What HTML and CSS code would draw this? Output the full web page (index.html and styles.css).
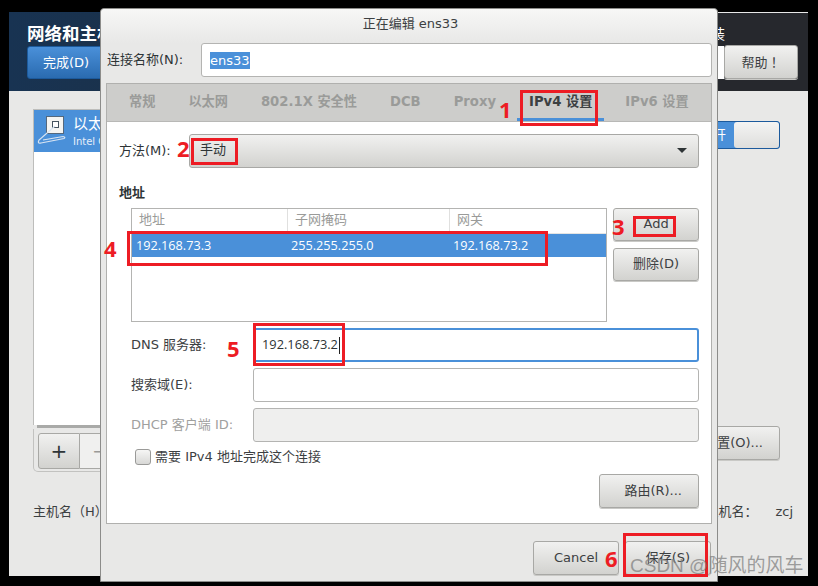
FILE: index.html
```html
<!DOCTYPE html>
<html lang="zh">
<head>
<meta charset="utf-8">
<title>正在编辑 ens33</title>
<link rel="stylesheet" href="styles.css">
</head>
<body>
<div class="desktop">
  <section class="bgwin">
    <header class="bghead">
      <div class="bghead-left">
        <h1 class="bgtitle">网络和主机名(N)</h1>
        <button class="btn btn-blue">完成(D)</button>
      </div>
      <div class="bghead-right">
        <div class="install">CENTOS 7 安装</div>
        <div class="help-row">
          <span class="kbd"></span>
          <button class="btn btn-help" lang="zh-Hant">帮助！</button>
        </div>
      </div>
    </header>
    <div class="bgmain">
      <div class="devcol">
        <div class="devlist">
          <div class="devrow">
            <svg class="devicon" width="30" height="32" viewBox="0 0 30 32">
              <rect x="9.5" y="2.5" width="17" height="17" fill="#f4f4f2" stroke="#55687c"/>
              <rect x="15.5" y="7.5" width="6" height="6" fill="#fff" stroke="#44525f"/>
              <path d="M18 12 L2 26 Q0 30 4 29 L27 24.5 Q29 23 26 22.5 L6 26" fill="none" stroke="#d8e4f2" stroke-width="1.2"/>
            </svg>
            <div class="devtext">
              <div class="devname">以太网 (ens33)</div>
              <div class="devsub">Intel Corporation</div>
            </div>
          </div>
        </div>
        <div class="devbar"></div>
        <div class="devtools">
          <button class="toolbtn">+</button>
          <button class="toolbtn toolbtn-off">−</button>
        </div>
      </div>
      <div class="sidecol">
        <div class="switch"><span class="switch-on">打开</span><span class="switch-knob"></span></div>
        <button class="btn btn-config">配置(O)...</button>
      </div>
    </div>
    <footer class="hostrow">
      <span>主机名（H）：</span>
      <span class="host-current"><span>当前主机名：</span><span class="host-val">zcj</span></span>
    </footer>
  </section>

  <section class="dialog">
    <div class="dlgtitle">正在编辑 ens33</div>
    <div class="namerow">
      <label class="namelabel">连接名称(N):</label>
      <div class="entry nameentry"><span class="sel">ens33</span></div>
    </div>
    <div class="notebook">
      <nav class="tabs">
        <span class="tab">常规</span>
        <span class="tab">以太网</span>
        <span class="tab">802.1X 安全性</span>
        <span class="tab">DCB</span>
        <span class="tab">Proxy</span>
        <span class="tab tab-active">IPv4 设置</span>
        <span class="tab">IPv6 设置</span>
      </nav>
      <div class="panel">
        <div class="methodrow">
          <span class="methodlabel">方法(M):</span>
          <div class="combo"><span>手动</span><span class="caret"></span></div>
        </div>
        <div class="addrhead">地址</div>
        <div class="addrrow">
          <div class="addrtable">
            <div class="thead"><span>地址</span><span>子网掩码</span><span>网关</span></div>
            <div class="trow"><span>192.168.73.3</span><span>255.255.255.0</span><span>192.168.73.2</span></div>
          </div>
          <div class="addrbtns">
            <button class="btn btn-side">Add</button>
            <button class="btn btn-side">删除(D)</button>
          </div>
        </div>
        <div class="formrow">
          <span class="formlabel">DNS 服务器:</span>
          <div class="entry entry-focus"><span>192.168.73.2</span><i class="cursor"></i></div>
        </div>
        <div class="formrow">
          <span class="formlabel">搜索域(E):</span>
          <div class="entry"></div>
        </div>
        <div class="formrow">
          <span class="formlabel formlabel-off">DHCP 客户端 ID:</span>
          <div class="entry entry-off"></div>
        </div>
        <label class="checkrow"><span class="check"></span>需要 IPv4 地址完成这个连接</label>
        <div class="routerow"><button class="btn btn-route">路由(R)...</button></div>
      </div>
    </div>
    <div class="dlgfoot">
      <button class="btn btn-foot">Cancel</button>
      <button class="btn btn-foot">保存(S)</button>
    </div>
  </section>

  <div class="mark m1"></div>
  <div class="mark m2"></div>
  <div class="mark m3"></div>
  <div class="mark m4"></div>
  <div class="mark m5"></div>
  <div class="mark m6"></div>
  <span class="num n1">1</span>
  <span class="num n2">2</span>
  <span class="num n3">3</span>
  <span class="num n4">4</span>
  <span class="num n5">5</span>
  <span class="num n6">6</span>
  <span class="watermark">CSDN @随风的风车</span>
</div>
</body>
</html>
```
FILE: styles.css
```css
* { box-sizing: border-box; }
html, body { margin: 0; padding: 0; background: #000; }
body {
  width: 818px;
  height: 586px;
  overflow: hidden;
  font: 13px/1.2 "DejaVu Sans", "Noto Sans CJK SC", sans-serif;
  color: #2e3436;
}
.desktop { position: relative; width: 818px; height: 586px; background: #000; overflow: hidden; }

/* shared button */
.btn {
  display: block;
  font: inherit;
  color: #3c4042;
  padding: 0;
  border: 1px solid #a8a8a5;
  border-radius: 3px;
  background: linear-gradient(#f1f1f0, #d2d2cf);
  box-shadow: 0 1px 0 #c9c9c6;
}

/* background window */
.bgwin {
  position: absolute;
  left: 9px;
  top: 12px;
  width: 799px;
  height: 564px;
  background: #e8e8e7;
  display: flex;
  flex-direction: column;
}
.bghead {
  height: 79px;
  display: flex;
  justify-content: space-between;
  background: linear-gradient(90deg, #183352 0, #1c3045 30%, #26282d 85%);
  border-top: 1px solid transparent;
  border-image: linear-gradient(90deg, #183352 50%, #e8e8e8 50%) 1;
  padding: 11px 10px 0 18px;
}
.bgtitle { margin: 0; font-size: 17.5px; line-height: 20px; font-weight: 700; color: #fff; white-space: nowrap; }
.btn-blue {
  margin-top: 2px;
  width: 78px;
  height: 33px;
  color: #fff;
  border-color: #1c5a9c;
  background: linear-gradient(#4a90d9, #2a6bb0);
  box-shadow: none;
}
.bghead-right { display: flex; flex-direction: column; align-items: flex-end; }
.install { color: #fff; font-size: 14px; line-height: 20px; margin-right: 73px; }
.help-row { display: flex; align-items: center; margin-top: 1px; }
.kbd { width: 6px; height: 33px; background: #fff; }
.btn-help { width: 74px; height: 34px; font-family: "Noto Sans CJK TC", sans-serif; }
.bgmain {
  flex: 1;
  display: flex;
  justify-content: space-between;
  padding: 18px 28px 0 24px;
}
.devcol { width: 300px; display: flex; flex-direction: column; }
.devlist { height: 316px; background: #fff; border: 1px solid #bdbdbb; border-bottom: 0; }
.devrow { height: 42px; background: #4a90d9; display: flex; color: #fff; padding: 4px 0 0 3px; }
.devicon { flex: none; }
.devtext { margin-left: 6px; padding-top: 1px; }
.devname { font-size: 15px; line-height: 18px; }
.devsub { font-size: 10px; line-height: 14px; margin-top: 2px; color: #e6eef8; }
.devbar { height: 3px; margin: 0 0 0 4px; background: #a9aaa8; }
.devtools {
  height: 43px;
  margin-top: 1px;
  padding: 4px;
  display: flex;
  border: 1px solid #c2c2c0;
  border-top: 0;
  border-radius: 0 0 5px 5px;
}
.toolbtn {
  width: 42px;
  height: 36px;
  font: 20px/1 "DejaVu Sans", sans-serif;
  border: 1px solid #a8a8a5;
  border-radius: 3px 0 0 3px;
  background: linear-gradient(#f1f1f0, #d2d2cf);
  color: #2e3436;
  padding: 0;
}
.toolbtn-off { background: #f0f0ef; color: #9a9a98; border-left: 0; border-radius: 0; }
.sidecol { width: 300px; display: flex; flex-direction: column; align-items: flex-end; }
.switch {
  margin-top: 12px;
  width: 120px;
  height: 28px;
  display: flex;
  border: 1px solid #1c5a9c;
  border-radius: 3px;
  background: #4a90d9;
}
.switch-on { flex: 1; color: #fff; text-align: right; line-height: 26px; padding-right: 8px; }
.switch-knob { width: 45px; background: linear-gradient(#f4f4f3, #dededc); border-radius: 3px; }
.btn-config { margin-top: 277px; width: 130px; height: 34px; text-align: right; padding-right: 16px; }
.hostrow {
  height: 90px;
  flex: none;
  padding: 0 15px 38px 24px;
  display: flex;
  align-items: center;
  justify-content: space-between;
  color: #3c4042;
}
.host-current { display: flex; gap: 18px; }

/* dialog */
.dialog {
  position: absolute;
  left: 100px;
  top: 8px;
  width: 618px;
  height: 574px;
  background: #e8e8e7;
  border: 1px solid #8c8c8a;
  border-radius: 4px 4px 0 0;
  display: flex;
  flex-direction: column;
}
.dlgtitle {
  height: 34px;
  padding: 7px 0 0 3px;
  text-align: center;
  line-height: 16px;
  color: #3c4042;
  background: linear-gradient(#f7f7f6, #e8e8e7);
  border-radius: 4px 4px 0 0;
}
.namerow { display: flex; align-items: center; height: 34px; padding: 0 5px 0 6px; }
.namelabel { width: 94px; flex: none; white-space: nowrap; }
.entry {
  flex: 1;
  height: 34px;
  background: #fff;
  border: 1px solid #b4b4b2;
  border-radius: 3px;
  display: flex;
  align-items: center;
  padding-left: 8px;
}
.sel { background: #4a90d9; color: #fff; line-height: 17px; }
.notebook {
  margin: 6px 5px 0;
  height: 441px;
  border: 1px solid #b0b0ae;
  display: flex;
  flex-direction: column;
}
.tabs { height: 37px; flex: none; background: #cdcdcb; display: flex; gap: 9px; padding-left: 10px; font-size: 13.2px; }
.tab { padding: 0 12px; line-height: 35px; font-weight: 700; color: #9a9b99; white-space: nowrap; }
.tab-active { color: #3c4042; border-bottom: 3px solid #4a90d9; }
.panel { flex: 1; background: #fff; padding: 12px 12px 0 12px; border-top: 1px solid #b8b8b6; }
.methodrow { display: flex; align-items: center; height: 34px; }
.methodlabel { width: 70px; flex: none; padding-bottom: 1px; }
.combo {
  flex: 1;
  height: 34px;
  display: flex;
  align-items: center;
  justify-content: space-between;
  padding: 0 11px 2px 10px;
  border: 1px solid #a8a8a5;
  border-radius: 3px;
  background: linear-gradient(#f1f1f0, #d2d2cf);
}
.caret { border: 5px solid transparent; border-top: 5px solid #2e3436; border-bottom: 0; }
.addrhead { margin: 17px 0 0; font-weight: 700; line-height: 16px; }
.addrrow { display: flex; gap: 6px; margin: 7px 0 6px 12px; }
.addrtable { width: 477px; height: 114px; border: 1px solid #b4b4b2; }
.thead, .trow { display: grid; grid-template-columns: 155px 162px 1fr; }
.thead { height: 25px; line-height: 22px; font-weight: 400; color: #9a9b99; border-bottom: 1px solid #e4e4e3; }
.thead span { padding-left: 7px; border-left: 1px solid #e0e0df; }
.thead span:first-child { border-left: 0; }
.trow { height: 23px; line-height: 22px; background: #4a90d9; color: #fff; font-family: "Open Sans", sans-serif; font-size: 12.7px; }
.trow span { padding-left: 4px; }
.addrbtns { width: 86px; display: flex; flex-direction: column; gap: 7px; }
.btn-side { height: 33px; padding-bottom: 2px; }
.formrow { display: flex; align-items: center; height: 34px; margin: 0 0 6px 12px; }
.formlabel { width: 122px; flex: none; color: #3c4042; }
.formlabel-off { color: #a0a09e; }
.entry-focus { border: 2px solid #4a90d9; font-family: "Open Sans", sans-serif; font-size: 12.8px; padding-left: 7px; }
.entry-off { background: #efefee; }
.cursor { width: 1px; height: 17px; background: #222; margin-left: 1px; }
.checkrow { display: flex; align-items: center; gap: 4px; margin: 4px 0 0 16px; height: 18px; color: #3c4042; }
.check {
  width: 16px;
  height: 16px;
  border: 1px solid #9a9a98;
  border-radius: 3px;
  background: linear-gradient(#f6f6f5, #d8d8d6);
}
.routerow { display: flex; justify-content: flex-end; margin-top: 8px; }
.btn-route { width: 100px; height: 34px; text-align: right; padding-right: 16px; }
.dlgfoot { flex: 1; display: flex; justify-content: flex-end; gap: 6px; padding: 17px 6px 0 0; }
.btn-foot { width: 86px; height: 34px; }

/* annotations */
.mark { position: absolute; border: 3px solid #ed1c24; }
.m1 { left: 520px; top: 90px; width: 78px; height: 36px; }
.m2 { left: 191px; top: 138px; width: 47px; height: 27px; }
.m3 { left: 633px; top: 216px; width: 43px; height: 21px; }
.m4 { left: 127px; top: 231px; width: 421px; height: 35px; }
.m5 { left: 253px; top: 323px; width: 92px; height: 43px; }
.m6 { left: 623px; top: 533px; width: 85px; height: 44px; }
.num { position: absolute; color: #ed1c24; font: 700 22px/24px "Open Sans", sans-serif; }
.n1 { left: 499px; top: 97px; }
.n2 { left: 177px; top: 136px; }
.n3 { left: 612px; top: 214px; }
.n4 { left: 104px; top: 236px; }
.n5 { left: 227px; top: 336px; }
.n6 { left: 605px; top: 546px; }
.watermark {
  position: absolute;
  left: 630px;
  top: 554px;
  font: 19px/24px "Liberation Sans", "Noto Sans CJK SC", sans-serif;
  color: rgba(130, 130, 130, .75);
  white-space: nowrap;
}
```
